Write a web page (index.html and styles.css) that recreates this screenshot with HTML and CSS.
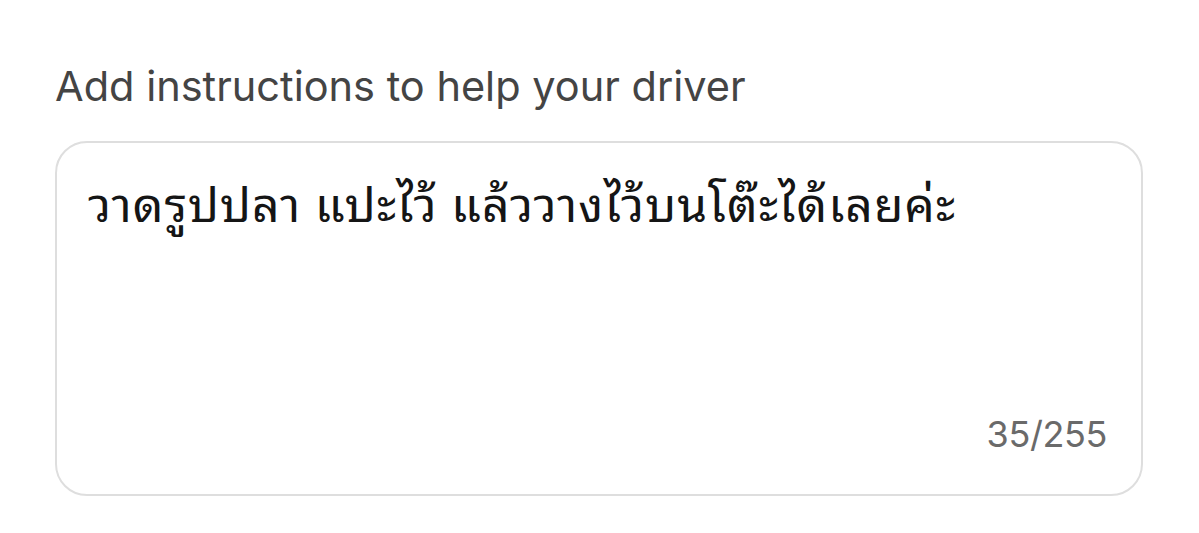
FILE: index.html
```html
<!DOCTYPE html>
<html lang="th">
<head>
<meta charset="utf-8">
<title>Driver instructions</title>
<link rel="stylesheet" href="styles.css">
</head>
<body>
  <div class="field">
    <label class="field-label" for="note">Add instructions to help your driver</label>
    <div class="note-box">
      <div class="note-text" id="note">วาดรูปปลา แปะไว้ แล้ววางไว้บนโต๊ะได้เลยค่ะ</div>
      <div class="note-count">35/255</div>
    </div>
  </div>
</body>
</html>
```
FILE: styles.css
```css
html, body {
  margin: 0;
  padding: 0;
  background: #ffffff;
}

.field {
  padding: 61px 56px 0 55px;
  display: flex;
  flex-direction: column;
  gap: 30px;
  font-family: Inter, "Liberation Sans", Arial, sans-serif;
}

.field-label {
  font-size: 41.5px;
  line-height: 50px;
  color: #444444;
  display: block;
}

.note-box {
  height: 351px;
  border: 2px solid #dedede;
  border-radius: 32px;
  box-sizing: content-box;
  padding: 0 34px 0 31px;
  display: flex;
  flex-direction: column;
  justify-content: space-between;
}

.note-text {
  padding-top: 30px;
  font-family: "Noto Sans Thai Looped", "Loma", "Garuda", "Tlwg Typo", "Noto Serif Thai", "Noto Sans Thai", sans-serif;
  font-size: 48px;
  line-height: 56px;
  letter-spacing: 1px;
  color: #151515;
}

.note-count {
  align-self: flex-end;
  padding-bottom: 38px;
  font-size: 36px;
  line-height: 44px;
  letter-spacing: -0.4px;
  color: #6a6a6a;
}
```
